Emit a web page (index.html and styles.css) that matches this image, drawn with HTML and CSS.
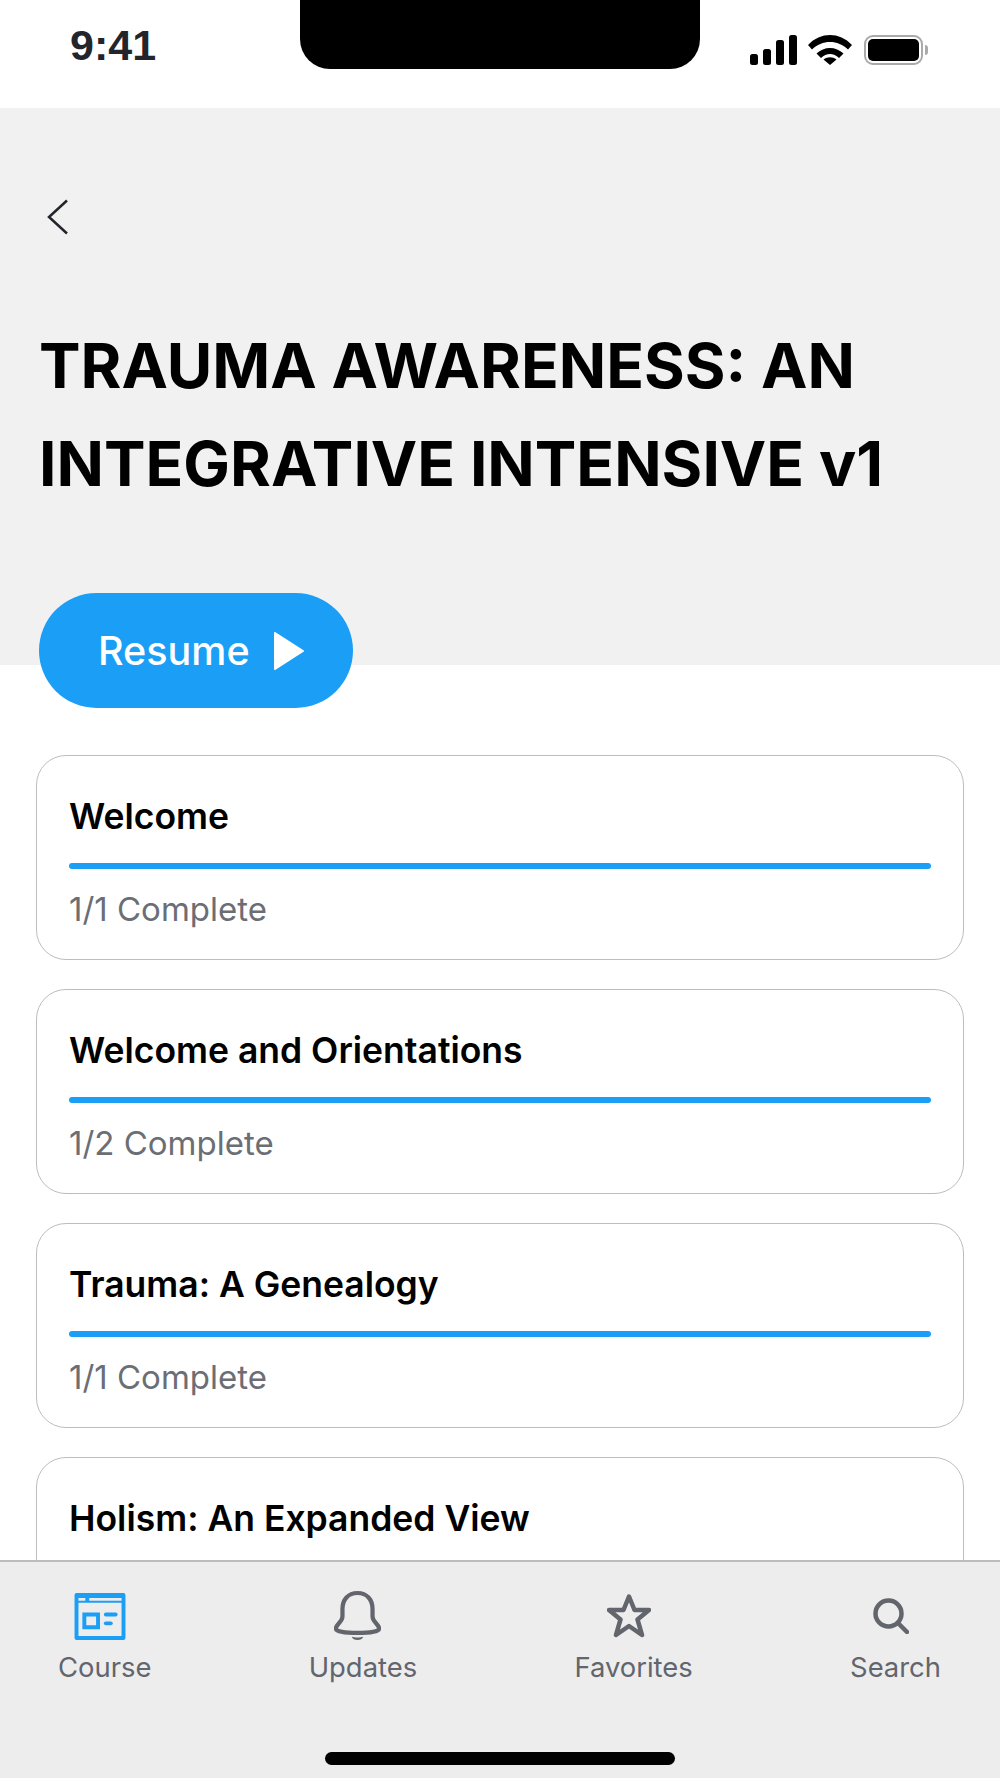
FILE: index.html
```html
<!DOCTYPE html>
<html lang="en">
  <head>
    <meta charset="UTF-8" />
    <meta name="viewport" content="width=device-width, initial-scale=1.0" />
    <title>Course</title>
    <link rel="stylesheet" href="styles.css">
  </head>
  <body>
    <div class="status-bar">
      <span class="clock">9:41</span>
      <div class="notch"></div>
      <div class="status-icons">
        <svg class="signal" width="47" height="30" viewBox="0 0 47 30">
          <rect x="0" y="19" width="8" height="11" rx="2.500" />
          <rect x="13" y="14" width="8" height="16" rx="2.500" />
          <rect x="26" y="5" width="8" height="25" rx="2.500" />
          <rect x="39" y="0" width="8" height="30" rx="2.500" />
        </svg>
        <svg class="wifi" width="44" height="30" viewBox="0 0 44 30">
          <path d="M0 10C12.500 -3.300 31.500 -3.300 44 10L40 14.500C30 4.500 14 4.500 4 14.500Z" />
          <path d="M8.500 18.500C16 11 28 11 35.500 18.500L31 23C25.500 17.500 18.500 17.500 13 23Z" />
          <path d="M15.500 24.500C19.500 21.500 24.500 21.500 28.500 24.500L22 30Z" />
        </svg>
        <div class="battery">
          <div class="battery-fill"></div>
        </div>
        <div class="battery-cap"></div>
      </div>
    </div>

    <div class="hero">
      <svg class="back" width="22" height="36" viewBox="0 0 22 36">
        <path d="M20 1.500L2 18L20 34.500" />
      </svg>
      <h1>TRAUMA AWARENESS: AN<br />INTEGRATIVE INTENSIVE v1</h1>
      <a class="resume-btn">
        <span class="resume-label">Resume</span>
        <svg width="32" height="40" viewBox="0 0 32 40">
          <path d="M2 2L30 20L2 38Z" />
        </svg>
      </a>
    </div>

    <div class="content">
      <div class="module">
        <h2>Welcome</h2>
        <div class="progress"></div>
        <p>1/1 Complete</p>
      </div>
      <div class="module">
        <h2>Welcome and Orientations</h2>
        <div class="progress"></div>
        <p>1/2 Complete</p>
      </div>
      <div class="module">
        <h2>Trauma: A Genealogy</h2>
        <div class="progress"></div>
        <p>1/1 Complete</p>
      </div>
      <div class="module">
        <h2>Holism: An Expanded View</h2>
      </div>
    </div>

    <div class="tab-bar">
      <div class="tabs">
        <div class="tab active">
          <div class="tab-icon">
            <svg width="52" height="47" viewBox="0 0 52 48">
              <path fill-rule="evenodd" d="M2 0H50A2 2 0 0 1 52 2V46A2 2 0 0 1 50 48H2A2 2 0 0 1 0 46V2A2 2 0 0 1 2 0ZM4 10V44H48V10ZM4 5V8H11V5ZM15 5V8H48V5Z" />
              <path fill-rule="evenodd" d="M8 20H26V37H8ZM12 24V33H22V24Z" />
              <rect x="30" y="20" width="14" height="4" rx="2" />
              <rect x="30" y="29" width="9" height="4" rx="2" />
            </svg>
          </div>
          <span>Course</span>
        </div>
        <div class="tab">
          <div class="tab-icon">
            <svg width="47" height="53" viewBox="0 0 50 54">
              <path class="line" d="M25 2C15 2 9 9 9 19V27C9 33 2 35 2 40C2 43 12 44.500 25 44.500C38 44.500 48 43 48 40C48 35 41 33 41 27V19C41 9 35 2 25 2Z" />
              <path d="M19 48.500C22 49.500 28 49.500 31 48.500C30 53 20 53 19 48.500Z" />
            </svg>
          </div>
          <span>Updates</span>
        </div>
        <div class="tab">
          <div class="tab-icon">
            <svg width="44" height="44" viewBox="0 0 44 44">
              <path class="line" d="M22 2.500L27.500 16H42L30.500 25.500L35 41L22 32L9 41L13.500 25.500L2 16H16.500Z" />
            </svg>
          </div>
          <span>Favorites</span>
        </div>
        <div class="tab">
          <div class="tab-icon">
            <svg width="36" height="36" viewBox="0 0 36 36">
              <circle class="line" cx="15.500" cy="15.500" r="13" />
              <path class="line" d="M25 25L34 34" />
            </svg>
          </div>
          <span>Search</span>
        </div>
      </div>
      <div class="home-indicator"></div>
    </div>
  </body>
</html>
```

FILE: styles.css
```css
html,
body {
  margin: 0;
  padding: 0;
  height: 1778px;
  overflow: hidden;
}

body {
  font-family: "Inter", "Liberation Sans", sans-serif;
  display: flex;
  flex-direction: column;
  background-color: #fff;
}

.status-bar {
  height: 108px;
  flex-shrink: 0;
  display: flex;
  align-items: flex-start;
}

.clock {
  width: 300px;
  flex-shrink: 0;
  box-sizing: border-box;
  padding-left: 70px;
  margin-top: 22px;
  font-family: "Liberation Sans", sans-serif;
  font-weight: bold;
  font-size: 43px;
  line-height: 46px;
  color: #22252b;
}

.notch {
  width: 400px;
  height: 69px;
  flex-shrink: 0;
  background-color: #000;
  border-radius: 0 0 30px 30px;
}

.status-icons {
  display: flex;
  align-items: center;
  margin-top: 35px;
  margin-left: 50px;
}

.signal,
.wifi {
  display: block;
  fill: #000;
}

.wifi {
  margin-left: 11px;
}

.battery {
  width: 59px;
  height: 30px;
  margin-left: 12px;
  box-sizing: border-box;
  border: 2px solid #aaa;
  border-radius: 9px;
  padding: 2px;
}

.battery-fill {
  height: 100%;
  background-color: #000;
  border-radius: 5px;
}

.battery-cap {
  width: 3px;
  height: 10px;
  margin-left: 2px;
  background-color: #aaa;
  border-radius: 0 3px 3px 0;
}

.hero {
  height: 557px;
  flex-shrink: 0;
  display: flex;
  flex-direction: column;
  align-items: flex-start;
  box-sizing: border-box;
  background-color: #f1f1f1;
  padding: 91px 40px 0;
}

.back {
  display: block;
  margin-left: 7px;
  fill: none;
  stroke: #22252b;
  stroke-width: 2.500;
}

.hero h1 {
  margin: 82px 0 0 -1px;
  font-size: 62.250px;
  line-height: 98px;
  font-weight: 700;
  color: #000;
  white-space: nowrap;
}

.resume-btn {
  display: flex;
  align-items: center;
  gap: 23px;
  box-sizing: border-box;
  width: 314px;
  height: 115px;
  margin: auto 0 -43px -1px;
  padding-left: 59px;
  border-radius: 58px;
  background-color: #1a9ef6;
  color: #fff;
  font-size: 39.500px;
  font-weight: 500;
  flex-shrink: 0;
  position: relative;
}

.resume-btn svg {
  fill: #fff;
  stroke: #fff;
  stroke-width: 2;
  stroke-linejoin: round;
}

.content {
  flex: 1;
  min-height: 0;
  overflow: hidden;
  padding: 90px 36px 0;
}

.module {
  box-sizing: border-box;
  height: 205px;
  margin-bottom: 29px;
  padding: 40px 32px 0;
  border: 1.500px solid #bdbdc0;
  border-radius: 30px;
}

.module h2 {
  margin: 0;
  font-size: 35.500px;
  line-height: 42px;
  font-weight: 600;
  color: #000;
}

.progress {
  height: 6px;
  margin-top: 25px;
  background-color: #1a9ef6;
  border-radius: 3px;
}

.module p {
  margin: 20px 0 0;
  font-size: 33px;
  line-height: 40px;
  color: #6b6e75;
}

.tab-bar {
  height: 218px;
  flex-shrink: 0;
  box-sizing: border-box;
  position: relative;
  background-color: #ededee;
  border-top: 2px solid #bcbcbc;
  padding-top: 24px;
}

.tabs {
  display: flex;
  justify-content: space-between;
  padding: 0 59px 0 58px;
}

.tab {
  display: flex;
  flex-direction: column;
  align-items: center;
  color: #62656c;
  font-size: 27.400px;
  line-height: 36px;
}

.tab-icon {
  height: 60px;
  margin: 0 10px 3px 0;
  display: flex;
  align-items: center;
}

.tab-icon svg {
  display: block;
  fill: #62656c;
}

.tab .line {
  fill: none;
  stroke: #62656c;
  stroke-width: 4.500;
  stroke-linejoin: round;
  stroke-linecap: round;
}

.tab.active svg {
  fill: #1a9ef6;
}

.home-indicator {
  position: absolute;
  left: 325px;
  bottom: 13px;
  width: 350px;
  height: 13px;
  background-color: #000;
  border-radius: 7px;
}
```
